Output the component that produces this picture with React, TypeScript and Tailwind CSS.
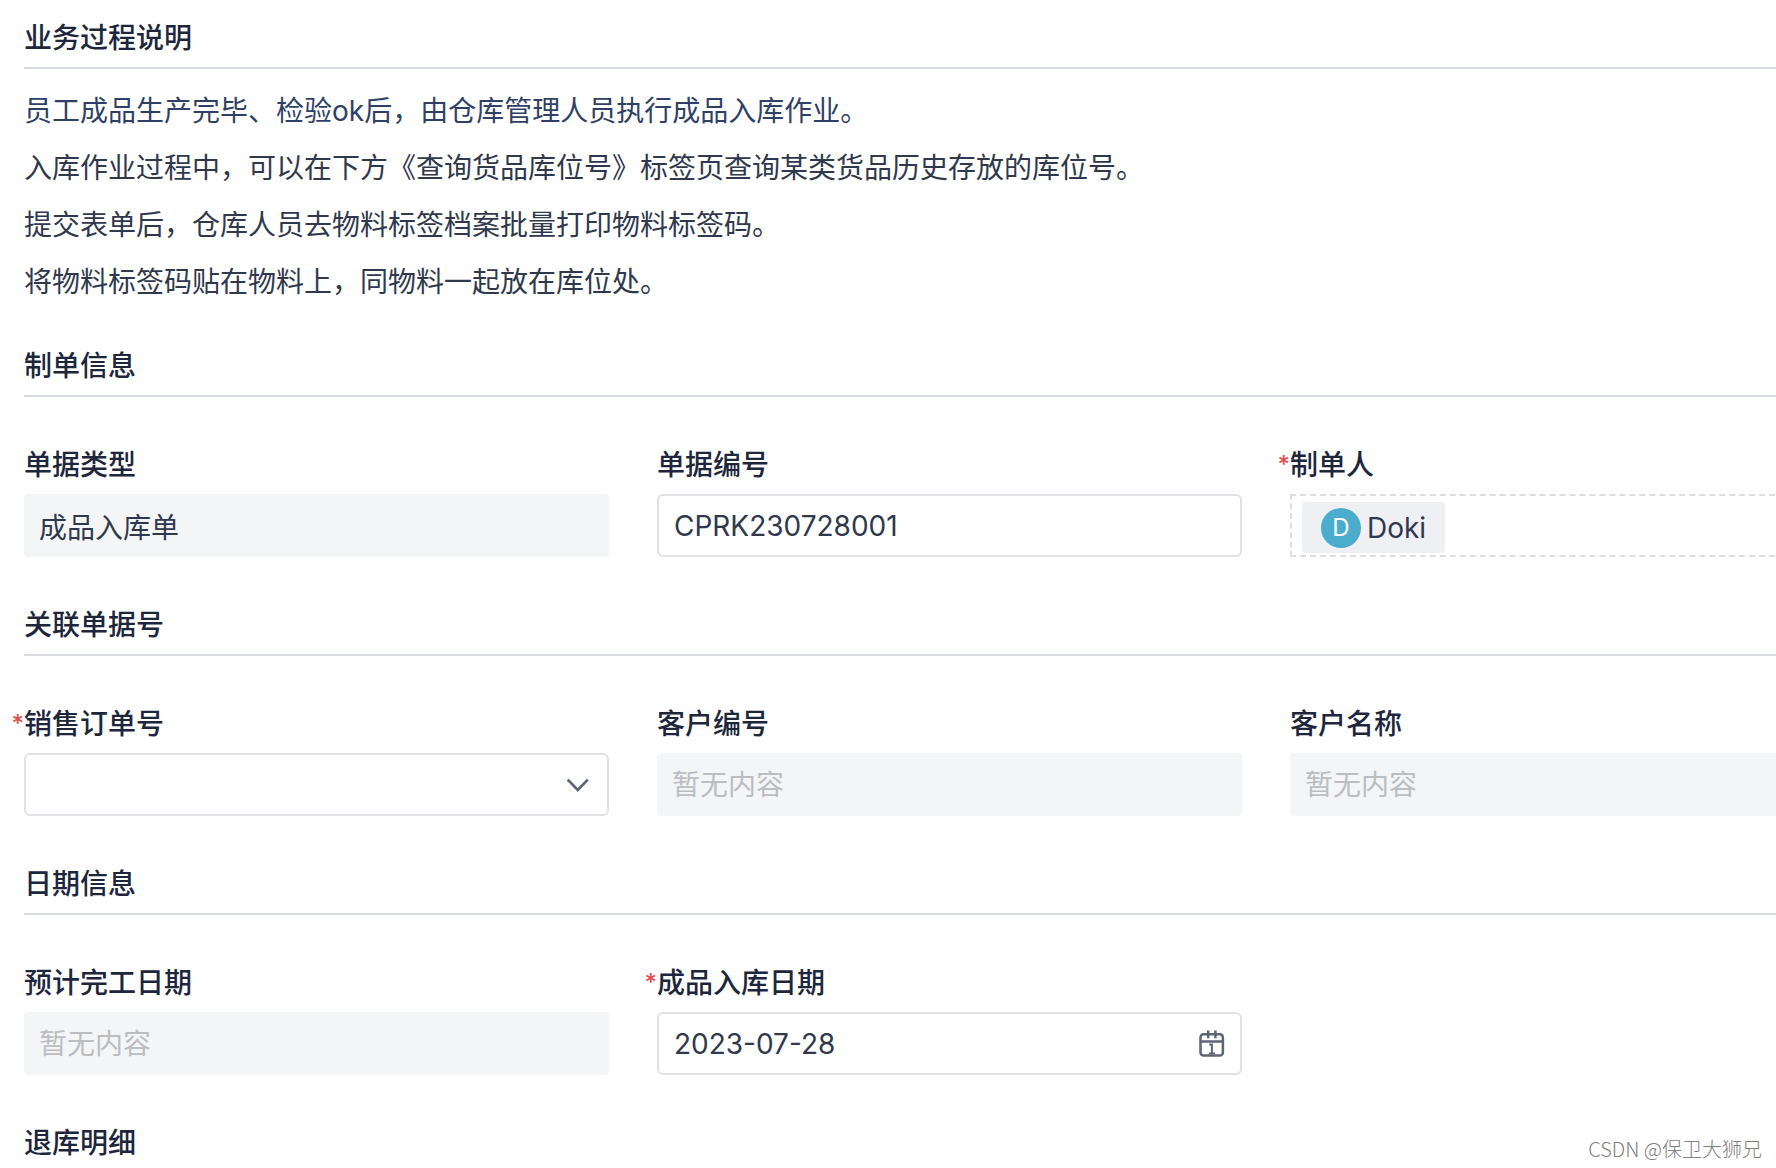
import React, { useState, ChangeEvent, ReactNode } from 'react';

interface SectionProps {
  title: string;
  children?: ReactNode;
}

interface FieldProps {
  id: string;
  label: string;
  required?: boolean;
  children: ReactNode;
}

interface DisabledInputProps {
  id: string;
  value?: string;
}

const instructions = [
  '入库作业过程中，可以在下方《查询货品库位号》标签页查询某类货品历史存放的库位号。',
  '提交表单后，仓库人员去物料标签档案批量打印物料标签码。',
  '将物料标签码贴在物料上，同物料一起放在库位处。'
];

const Section: React.FC<SectionProps> = ({ title, children }) => (
  <section>
    <h2 className="border-b-2 border-[#d9dce0] pb-[9px] text-[28px] leading-10 font-medium text-[#1d263b]">
      {title}
    </h2>
    {children}
  </section>
);

const FieldRow: React.FC<{ children: ReactNode }> = ({ children }) => (
  <div className="my-12 grid grid-cols-[repeat(3,minmax(585px,1fr))] gap-12">
    {children}
  </div>
);

const Field: React.FC<FieldProps> = ({ id, label, required, children }) => (
  <div>
    <label
      htmlFor={id}
      className="relative mb-[9px] block text-[28px] leading-10 font-medium text-[#1d263b]"
    >
      {required && (
        <span className="absolute top-0 right-full text-2xl leading-10 text-[#e0504a]">*</span>
      )}
      {label}
    </label>
    {children}
  </div>
);

const DisabledInput: React.FC<DisabledInputProps> = ({ id, value }) => (
  <input
    id={id}
    type="text"
    disabled
    value={value ?? ''}
    placeholder="暂无内容"
    className="block h-[63px] w-full rounded bg-[#f4f5f7] px-[15px] text-[28px] text-[#2f384c] placeholder:text-[#bbbdc1]"
  />
);

const CalendarIcon: React.FC = () => (
  <svg width="26" height="28" viewBox="0 0 26 28" fill="none" stroke="#5c6475" strokeWidth="2.5">
    <rect x="1.5" y="4.2" width="22.4" height="21.2" rx="3" />
    <path d="M1.5 11.6H23.9M9.2 0.6V8.2M16.4 0.6V8.2" />
    <path d="M10.2 14.6H12.9V24M9.8 23.4H16" strokeWidth="2" />
  </svg>
);

const App: React.FC = () => {
  const [orderNo, setOrderNo] = useState<string>('');
  const [billNo, setBillNo] = useState<string>('CPRK230728001');
  const [stockDate, setStockDate] = useState<string>('2023-07-28');

  return (
    <main className="relative h-screen overflow-hidden bg-white pt-[18px] pl-6 font-[Inter,'Noto_Sans_CJK_SC',sans-serif]">
      <Section title="业务过程说明">
        <div className="mt-[14px] mb-[35px] text-[28px] leading-[57px] text-[#2f384c]">
          <p className="text-[#2f3f66]">员工成品生产完毕、检验ok后，由仓库管理人员执行成品入库作业。</p>
          {instructions.map(line => (
            <p key={line}>{line}</p>
          ))}
        </div>
      </Section>

      <Section title="制单信息">
        <FieldRow>
          <Field id="bill-type" label="单据类型">
            <DisabledInput id="bill-type" value="成品入库单" />
          </Field>
          <Field id="bill-no" label="单据编号">
            <input
              id="bill-no"
              type="text"
              value={billNo}
              onChange={(e: ChangeEvent<HTMLInputElement>) => setBillNo(e.target.value)}
              className="block h-[63px] w-full rounded-md border-2 border-[#e0e2e5] px-[15px] text-[28px] text-[#2f384c]"
            />
          </Field>
          <Field id="creator" label="制单人" required>
            <div className="flex h-[63px] items-start border-2 border-dashed border-[#dcdee1] px-[10px] pt-[6px]">
              <button
                id="creator"
                type="button"
                className="flex h-[51px] items-center gap-[6px] rounded-sm bg-[#eff0f4] px-[19px] text-[28px] text-[#2f384c]"
              >
                <span className="flex size-10 items-center justify-center rounded-full bg-[#4bacce] text-2xl text-white">
                  D
                </span>
                Doki
              </button>
            </div>
          </Field>
        </FieldRow>
      </Section>

      <Section title="关联单据号">
        <FieldRow>
          <Field id="order-no" label="销售订单号" required>
            <div className="relative">
              <select
                id="order-no"
                value={orderNo}
                onChange={(e: ChangeEvent<HTMLSelectElement>) => setOrderNo(e.target.value)}
                className="block h-[63px] w-full appearance-none rounded-md border-2 border-[#e0e2e5] bg-white px-[15px] text-[28px] text-[#2f384c]"
              >
                <option value=""></option>
              </select>
              <svg
                className="pointer-events-none absolute inset-y-0 right-5 my-auto"
                width="22"
                height="14"
                viewBox="0 0 22 14"
                fill="none"
                stroke="#5c6475"
                strokeWidth="2.6"
              >
                <path d="M0.8 1.6L10.8 12L20.8 1.6" />
              </svg>
            </div>
          </Field>
          <Field id="customer-no" label="客户编号">
            <DisabledInput id="customer-no" />
          </Field>
          <Field id="customer-name" label="客户名称">
            <DisabledInput id="customer-name" />
          </Field>
        </FieldRow>
      </Section>

      <Section title="日期信息">
        <FieldRow>
          <Field id="finish-date" label="预计完工日期">
            <DisabledInput id="finish-date" />
          </Field>
          <Field id="stock-date" label="成品入库日期" required>
            <div className="flex h-[63px] items-center rounded-md border-2 border-[#e0e2e5] px-[15px]">
              <input
                id="stock-date"
                type="text"
                value={stockDate}
                onChange={(e: ChangeEvent<HTMLInputElement>) => setStockDate(e.target.value)}
                className="min-w-0 flex-1 text-[28px] text-[#2f384c] outline-none"
              />
              <button type="button" aria-label="选择日期">
                <CalendarIcon />
              </button>
            </div>
          </Field>
        </FieldRow>
      </Section>

      <Section title="退库明细" />

      {/* Watermark */}
      <span className="absolute right-[14px] bottom-[5px] font-['Noto_Sans_CJK_SC',sans-serif] text-xl leading-7 font-light text-[#808080]">
        CSDN @保卫大狮兄
      </span>
    </main>
  );
};

export default App;
